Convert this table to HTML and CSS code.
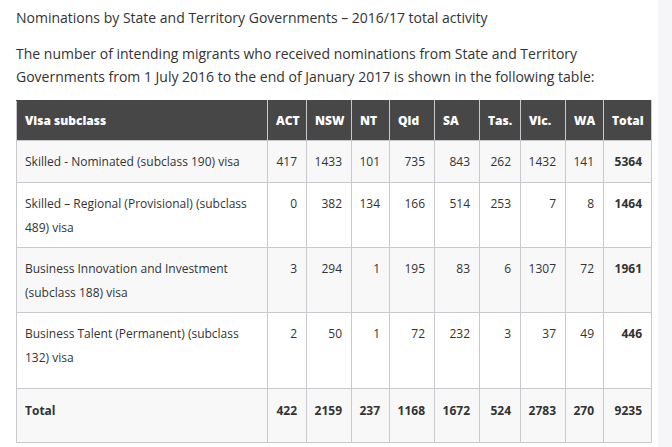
FILE: index.html
```html
<!DOCTYPE html>
<html lang="en">
<head>
<meta charset="utf-8">
<link rel="stylesheet" href="styles.css">
</head>
<body>
<div class="page">
  <p class="title">Nominations by State and Territory Governments – 2016/17 total activity</p>
  <p class="intro">The number of intending migrants who received nominations from State and Territory Governments from 1 July 2016 to the end of January 2017 is shown in the following table:</p>
  <table class="data">
    <colgroup>
      <col class="c-visa"><col class="c-act"><col class="c-nsw"><col class="c-nt"><col class="c-qld"><col class="c-sa"><col class="c-tas"><col class="c-vic"><col class="c-wa"><col class="c-tot">
    </colgroup>
    <thead>
      <tr><th>Visa subclass</th><th>ACT</th><th>NSW</th><th>NT</th><th>Qld</th><th>SA</th><th>Tas.</th><th>Vic.</th><th>WA</th><th>Total</th></tr>
    </thead>
    <tbody>
      <tr class="r1 alt"><td class="left">Skilled - Nominated (subclass 190) visa</td><td>417</td><td>1433</td><td>101</td><td>735</td><td>843</td><td>262</td><td>1432</td><td>141</td><td class="b">5364</td></tr>
      <tr class="r2"><td class="left">Skilled – Regional (Provisional) (subclass 489) visa</td><td>0</td><td>382</td><td>134</td><td>166</td><td>514</td><td>253</td><td>7</td><td>8</td><td class="b">1464</td></tr>
      <tr class="r3 alt"><td class="left">Business Innovation and Investment (subclass 188) visa</td><td>3</td><td>294</td><td>1</td><td>195</td><td>83</td><td>6</td><td>1307</td><td>72</td><td class="b">1961</td></tr>
      <tr class="r4"><td class="left">Business Talent (Permanent) (subclass 132) visa</td><td>2</td><td>50</td><td>1</td><td>72</td><td>232</td><td>3</td><td>37</td><td>49</td><td class="b">446</td></tr>
      <tr class="r5 alt total"><td class="left">Total</td><td>422</td><td>2159</td><td>237</td><td>1168</td><td>1672</td><td>524</td><td>2783</td><td>270</td><td>9235</td></tr>
    </tbody>
  </table>
</div>
</body>
</html>
```

FILE: styles.css
```css
html, body {
  margin: 0;
  padding: 0;
  background: #ffffff;
}
body {
  font-family: "Open Sans", "Liberation Sans", sans-serif;
  color: #333333;
  width: 672px;
  height: 447px;
  overflow: hidden;
  background: linear-gradient(to right, #ffffff 0, #ffffff 658px, #f6f6f8 658px);
}
.page {
  padding: 7px 0 0 16px;
  width: 635px;
}
.title {
  margin: 0;
  font-size: 14px;
  line-height: 22px;
}
.intro {
  margin: 13px 0 0 0;
  font-size: 14px;
  line-height: 23px;
}
.data {
  margin-top: 12px;
  border-collapse: collapse;
  table-layout: fixed;
  width: 635px;
  font-size: 12px;
}
.c-visa { width: 251px; }
.c-act { width: 39px; }
.c-nsw { width: 45px; }
.c-nt { width: 38px; }
.c-qld { width: 45px; }
.c-sa { width: 45px; }
.c-tas { width: 41px; }
.c-vic { width: 45px; }
.c-wa { width: 38px; }
.c-tot { width: 48px; }
.data th, .data td {
  border: 1px solid #c9c9cd;
  padding: 9px 9px 0 0;
  text-align: right;
  vertical-align: top;
  line-height: 24px;
  box-sizing: border-box;
}
.data th {
  background: #474747;
  color: #ffffff;
  font-weight: 800;
  text-align: left;
  border-color: #c9c9cd;
  border-top-color: #474747;
  vertical-align: middle;
  padding: 0 0 0 8px;
  height: 40px;
  white-space: nowrap;
}
.data td.left {
  text-align: left;
  padding-left: 8px;
}
.data td.b { font-weight: 700; }
.alt td { background: #f8f8f9; }
.r1 td { height: 42px; }
.r2 td { height: 65px; }
.r3 td { height: 65px; }
.r4 td { height: 76px; }
.r5 td { height: 54px; }
.total td { font-weight: 700; padding-top: 10px; }
```
